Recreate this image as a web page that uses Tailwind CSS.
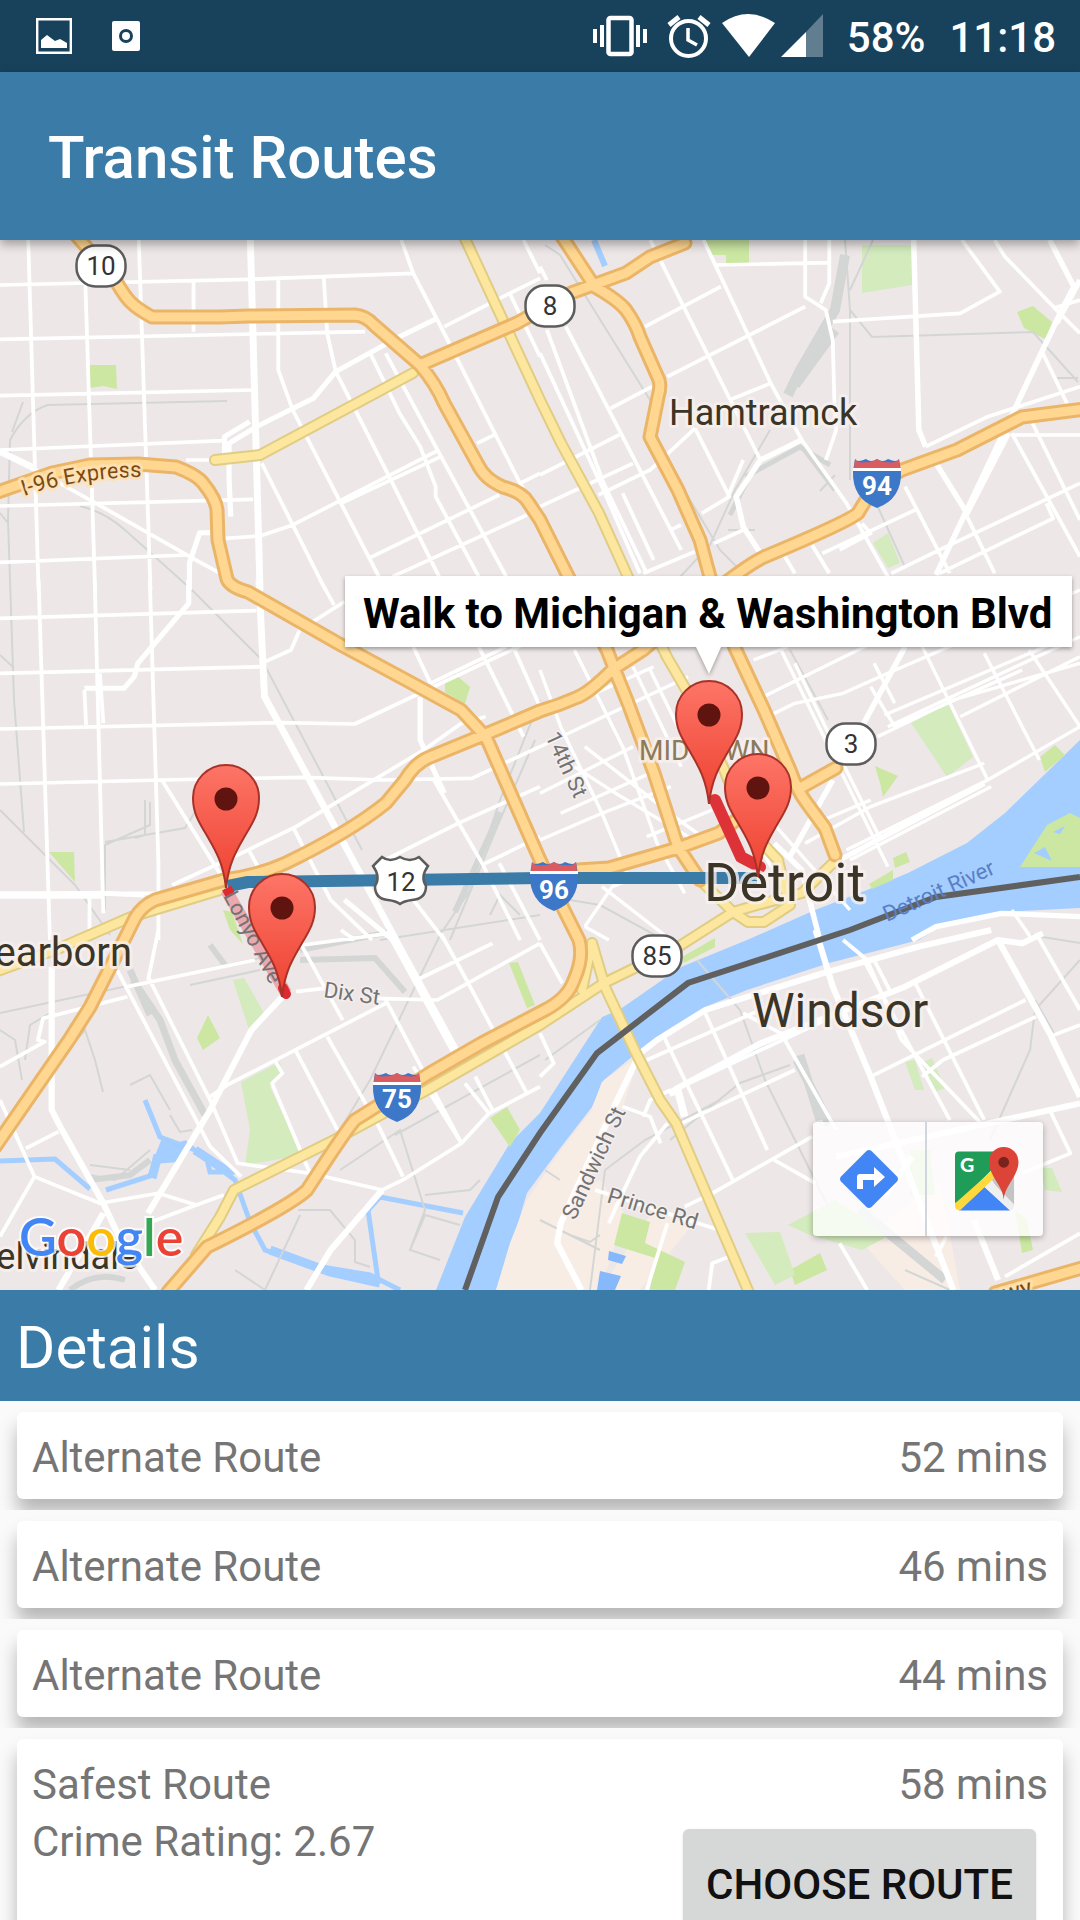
<!DOCTYPE html>
<html lang="en">
<head>
<meta charset="utf-8">
<meta name="viewport" content="width=device-width, initial-scale=1">
<title>Transit Routes</title>
<script src="https://cdn.jsdelivr.net/npm/@tailwindcss/browser@4"></script>
</head>
<body class="flex h-screen flex-col overflow-hidden bg-[#fafafa] font-['Roboto',sans-serif]">

<div class="flex h-[72px] shrink-0 items-center justify-between bg-[#18425b] pr-6 pl-9 text-white">
  <div class="flex items-center gap-10">
    <svg class="size-9" viewBox="0 0 36 36" fill="none" aria-label="Picture saved"><path d="M1.200 1.200H34.800V34.800H1.200Z" stroke="#fff" stroke-width="2.400"/><path d="M5 30V22L11 17L19 23L24 21L31 25V30Z" fill="#fff"/></svg>
    <svg class="h-[30px] w-7" viewBox="0 0 28 30" aria-label="Capture"><rect width="28" height="30" rx="2" fill="#fff"/><circle cx="14" cy="15" r="5.500" fill="none" stroke="#18425b" stroke-width="3"/></svg>
  </div>
  <div class="flex items-center">
    <svg class="h-12 w-[242px]" viewBox="594 12 242 48" fill="none" aria-label="Vibrate, alarm, Wi-Fi, mobile signal">
      <rect x="609.500" y="18" width="23" height="36" rx="2" stroke="#fff" stroke-width="4.500"/>
      <path d="M596 29V43M603 25V47M639 25V47M646 29V43" stroke="#fff" stroke-width="4"/>
      <circle cx="689.500" cy="38.500" r="17.500" stroke="#fff" stroke-width="4"/>
      <path d="M689 28V40L698 45" stroke="#fff" stroke-width="3.500"/>
      <path d="M670 25L680 17M700 17L710 25" stroke="#fff" stroke-width="5"/>
      <path d="M723 23Q749 5 776 23L750 57Z" fill="#fff"/>
      <path d="M807 32L824 14V57H807Z" fill="#607e90"/><path d="M782 57L807 32V57Z" fill="#fff"/>
    </svg>
    <span class="ml-3 pt-1 text-[42px] leading-none font-medium">58%</span>
    <span class="ml-6 pt-1 text-[42px] leading-none font-medium">11:18</span>
  </div>
</div>

<header class="relative z-10 flex h-[168px] shrink-0 items-center bg-[#3b7ba8] px-12 pt-1 shadow-[0_4px_10px_rgba(0,0,0,0.35)]">
  <h1 class="text-[60px] font-medium text-white">Transit Routes</h1>
</header>

<main class="relative aspect-[1080/1050] w-full shrink-0 overflow-hidden">
<svg class="block size-full font-['Roboto',sans-serif]" viewBox="0 240 1080 1050" role="img" aria-label="Map of Detroit with the selected route">
<defs>
  <linearGradient id="pinFill" x1="0" y1="0" x2="0" y2="1"><stop offset="0" stop-color="#fd7567"/><stop offset="1" stop-color="#ee4130"/></linearGradient>
  <g id="pin">
    <path d="M0 0C-3 -27 -12 -40 -20 -54C-28 -67 -33 -76 -33 -90A33 33 0 0 1 33 -90C33 -76 28 -67 20 -54C12 -40 3 -27 0 0Z" fill="url(#pinFill)" stroke="#a83228" stroke-width="2"/>
    <circle cy="-89" r="11.500" fill="#5f1410"/>
  </g>
  <g id="interstate">
    <path d="M-22 -24Q-20 -20 -11 -24Q-6 -20 0 -24Q6 -20 11 -24Q20 -20 22 -24L24 -12Q25 16 0 25Q-25 16 -24 -12Z" fill="#3c77c8"/>
    <path d="M-22 -24Q-18 -19 -11 -21Q-5 -20 0 -24Q5 -20 11 -21Q18 -19 22 -24L23 -14H-23Z" fill="#da5c60"/>
    <path d="M-24 -13.500H24" stroke="#fff" stroke-width="3"/>
  </g>
  <rect id="oval" x="-24.500" y="-20.500" width="49" height="41" rx="19" fill="#fff" stroke="#5c5c5c" stroke-width="2.500"/>
  <path id="express" d="M24 496Q80 477 148 477"/>
  <path id="arterialLines" d="M461 230L540 400L561 443L599 513L628 577L667 657L688 693L723 767L747 827L778 860L785 890M413 373L260 455L215 460M196 1255L220 1217L234 1190L334 1140L427 1090L540 1025L604 983L678 947L733 912L757 905L802 893L836 860M592 943L605 987L636 1053L660 1100L676 1123L750 1295M592 943L582 990M-5 972L60 948L131 917L220 890M700 880L733 912L748 922L764 922L790 905"/>
  <path id="freewayLines" d="M76 235L117 283C126 298 130 305 152 317L220 317L248 316L355 315Q366 316 374 325L420 365Q436 384 444 403L477 463C483 475 490 481 503 487Q522 492 528 502L540 520L568 576L607 650L614 668L628 703L654 773L678 847L700 880M420 365L517 323L571 293L626 273L650 257L685 243M561 235L595 287Q618 300 626 310Q636 324 640 337L659 380Q661 387 658 397L650 437L678 490L700 540L710 577L735 648L764 710L790 770Q797 790 806 802L825 828L835 855M802 787L836 768M-5 493L52 473L90 465L138 464L176 467Q197 475 203 483Q216 499 217 510L218 540L227 579Q230 587 248 592L341 645L406 680L461 710L486 737L540 860L564 910L579 940Q584 958 574 980Q568 998 545 1010L482 1043L430 1073L382 1103L355 1120Q346 1130 307 1190Q290 1206 207 1247L168 1292M1085 409L1022 417L957 450L902 470L875 485L858 513Q850 521 764 557Q735 571 643 650L612 670Q590 692 578 697Q560 705 540 711L486 734L430 757Q415 763 405 780L386 803Q350 832 286 863Q260 875 224 880L155 900Q142 906 135 918L124 940L90 1007L69 1040L-5 1147M578 870L609 868L678 848L719 833L747 812M1085 1267L995 1293"/>
</defs>
<rect y="240" width="1080" height="1050" fill="#eee7e8"/>

<!-- water -->
<path d="M1080 740L1005 813L967 843L908 873L867 890L815 910L747 940L681 967L619 1010L602 1017L540 1113L510 1143L465 1217L436 1290H496L512 1243L527 1193L561 1147L592 1107L604 1080L640 1050L705 1007L747 990L829 963L919 940L946 923L1001 912L1080 908Z" fill="#a3ceff"/>
<path d="M496 1290L510 1243L527 1200L561 1150L592 1110L602 1082L640 1055L610 1120L575 1220L560 1255L610 1290ZM600 1290L650 1215H700L640 1290Z" fill="#f8ede5"/>
<path d="M602 1082L640 1055L622 1110L592 1108Z" fill="#f8ede5"/>
<path d="M540 1290L560 1200L600 1180L625 1215L600 1290ZM860 1240L940 1180L960 1290H905Z" fill="#f8ede5"/>
<g fill="none" stroke="#a3ceff" stroke-width="5">
  <path d="M0 1161L55 1159L90 1189M106 1190L150 1176L160 1150L185 1143L235 1180L250 1222L265 1250L310 1265L370 1275L400 1290M145 1100L160 1137L195 1150M380 1197L368 1210L378 1280M380 1197L463 1213M206 1155L210 1172L235 1172" />
  <path d="M158 1155L152 1178M195 1150L233 1175M270 1250L330 1272L380 1283" stroke-width="9"/>
  <path d="M594 240L605 266" stroke-width="6"/>
</g>
<path d="M162 1138L190 1150L180 1162L152 1164Z" fill="#a3ceff"/>

<!-- parks -->
<g fill="#cbe7a2">
  <path d="M90 365H116L117 389L103 386L90 388ZM705 240H749V263H726V255H712ZM1017 312L1033 306L1052 322L1047 340L1024 328ZM445 683L455 674L470 687L465 704L445 692ZM49 852H74L75 882ZM875 766L898 776L883 797L880 783ZM1040 757L1055 745L1065 755L1045 772ZM893 858L906 852L910 862L895 868ZM869 884L893 870V880L872 889ZM509 963L518 962L535 1005L527 1008ZM197 1038L208 1015L220 1038L203 1050ZM490 1118L507 1107L520 1130L510 1147ZM223 910L232 912L243 944L230 930ZM1020 867L1047 825L1070 813L1080 818V867ZM622 1213L650 1222L645 1243L685 1262L675 1290H650L655 1258L614 1245ZM790 1270L820 1253L827 1270L795 1285ZM1015 1210L1027 1220L1033 1250L1022 1253ZM682 957L715 938V947L684 963Z"/>
</g>
<g fill="#d3ebbd">
  <path d="M862 245H912V285L862 293ZM873 543L888 533L900 563L888 568ZM911 723L948 703L973 757L947 777ZM241 1082L280 1062L283 1075L270 1087L302 1155L245 1165L250 1130ZM233 980L244 978L264 1013L249 1030ZM905 1062L915 1060L924 1090H915ZM923 1062L932 1058L945 1088L935 1092ZM745 1233L780 1232L795 1275L775 1285ZM788 1225L835 1200L890 1235L862 1250L810 1235ZM910 1150H930L935 1195H910ZM1040 1168L1052 1168L1062 1192L1045 1190ZM745 812L760 802L770 817L752 827Z"/>
</g>
<path d="M1034 853L1045 847L1052 861ZM1053 832L1065 826L1060 834Z" fill="#a3ceff"/>
<path d="M609 1251L626 1256L622 1264L608 1260ZM600 1271L621 1276L615 1290H597Z" fill="#86b8fb"/>

<!-- rail lines -->
<g fill="none" stroke="#d3d6d5">
  <g stroke-width="2">
    <path d="M227 401L48 405Q25 412 10 440L8 520L14 700L24 832M23 402L12 432M0 513L8 523M80 506Q105 512 125 530L192 590L262 660L362 850M0 655L14 668M0 810L75 885L110 935M145 800V835L135 838M150 802V825L105 845V910M105 842L185 828L195 812"/>
    <path d="M545 245L560 255L650 400L660 450L720 550L750 580M790 650L828 720M845 240L850 310L872 337L1033 332L1078 382M850 310V480M1057 378H1078M873 240L850 290M680 577L710 545L735 490L770 430M877 505L905 567M728 530H755M820 491L835 475"/>
    <path d="M540 700L500 800L470 890L440 935L370 1080L340 1130M535 740L500 820L450 940M380 940L540 915M490 915L500 895L520 915M570 900L600 905L655 935"/>
    <path d="M0 1013L250 960L395 930M190 985L260 970M0 1030L15 1040L22 1080M25 1060L30 1025L55 1010M60 1060L85 1030L95 1060L103 1092M130 1085L150 1075L170 1110M170 1115L180 1132L192 1130M90 1175L115 1180L150 1150M90 1165L130 1170M395 1135L540 1055M340 1170L400 1130L425 1210L410 1250L440 1260M298 1210L330 1210L355 1240V1262L370 1267M425 1195L470 1190L480 1180M410 1250L425 1215L460 1225M235 1270L265 1290L300 1215M0 1140L60 1045"/>
    <path d="M697 960L740 1010L765 1080L830 1210M670 1140L740 1083L790 1065M605 1170L645 1140L720 1100M605 1170L590 1290M1080 960L1035 1010L1030 1050L990 1140M1035 1000L1055 1035M560 1180L545 1170M570 1235L590 1242L600 1235M540 1220L600 1250M1030 935L1080 943M905 1270L950 1290M545 1060L600 1020"/>
  </g>
  <path d="M845 255L835 310L800 370L788 395M835 330L795 385" stroke-width="10"/>
  <path d="M745 477L800 447L830 465M750 475L730 515M803 448L835 490" stroke-width="5"/>
  <path d="M133 980L160 1020L175 1060L205 1115M130 970L150 1015" stroke-width="7"/>
  <path d="M300 950L390 932M300 960L375 958L405 992M500 812L455 912M210 945L225 965M70 1290Q95 1270 125 1280M90 1180L130 1175L150 1160" stroke-width="6"/>
  <path d="M797 1060L830 1125M860 1210L945 1280M800 1055L820 1120" stroke-width="9"/>
</g>

<!-- local streets -->
<g fill="none" stroke="#fff" stroke-linejoin="round">
  <g transform="translate(0 230) scale(.3444 .3333)" stroke-width="11">
    <path d="M82 30L112 1080M403 30L437 1080M248 165L276 1080M0 165L725 148L1200 130M0 328L735 312L1060 305M0 497L735 480M0 660L650 632M0 828L735 808M0 997L540 975M562 150V305M808 145V420L850 540L990 820L1100 1040M940 140L950 310L975 425L1130 740L1275 1040M1165 30L1200 130L1290 310L1510 760L1568 860M1520 30L1568 130M1568 145L1480 190L1290 290M1075 370L1160 550L1220 650L1265 770V800L1390 1040M1120 370L1260 640L1470 1040M760 700L945 1080M655 925L755 918L850 885L1275 660M990 820L1280 680M1070 985L1450 795M1140 1040L1530 855M1480 190L1568 380M1385 640L1435 615M0 660L270 815L560 985L640 1030M540 690H620M1510 760L1568 730"/>
    <path d="M1270 265L1160 320L975 425L910 505L745 590L665 640V740L670 860M725 575L652 620V700M610 908H580L550 1000V1080" stroke-width="15"/>
    <path d="M727 30L755 1080M0 665L100 715" stroke-width="20"/>
  </g>
  <g transform="translate(540 230) scale(.3444 .3333)" stroke-width="11">
    <path d="M0 110L20 150M20 300L185 760L310 1030M75 290L410 960M0 370L180 770L290 1030M320 30L640 690M475 30L670 460L760 630L890 820L1010 1040M510 105L840 98M305 290L525 170M370 440L770 230M205 535L325 470M550 510L670 460M0 735L230 615M0 830L270 700M170 795L320 720L450 595M240 790L330 990M450 595L550 800L470 850M380 900L410 885M545 800L590 690M505 940L590 900M300 1030L450 965M770 30V200L830 240L850 330L855 520L860 600L830 690M840 30V160L815 220M850 275L1220 250L1335 185L1225 30M1320 30L1350 80L1500 240L1568 310M1490 235L1568 210M1460 370L1530 520M1120 650L1300 560L1568 470M1370 615L1568 615M1370 610L1568 980M1430 580L1568 870M1060 770L1190 1030M820 970L1090 840M790 945L840 1030M935 880L960 910L870 960M1020 1030L1160 960L1568 760M1160 1030L1490 865L1470 820M1240 860L1320 1030M700 960L740 1030"/>
    <path d="M1085 30L1100 600L1120 650M1480 30L1550 170L1510 250L1150 1035M1568 150L1500 280M1360 610L1240 850L1150 700M640 690L570 800L590 890L640 970M640 690L760 630" stroke-width="16"/>
  </g>
  <g transform="translate(0 580) scale(.3444 .3333)" stroke-width="11">
    <path d="M112 0L145 1080M275 0L300 1000M435 0L460 850V1080M0 115L745 92M0 280L765 260M0 447L810 428L1030 432L1568 170M0 612L470 600L880 592L1110 600L1370 595L1568 500M930 0L970 75M1000 65L870 150L845 210L770 245M1200 200L1250 310M1390 200L1520 470M1490 200L1568 380M1250 310L1470 200M1410 410L1340 430L1230 510L860 740L700 820L500 915M470 600L650 900M850 740L960 960L1080 1080M1260 600L1400 850L1510 1080M1568 620L1330 730L1080 860M1400 855L1568 770M290 280L300 430M250 435L245 330M725 815L780 920M1450 850L1568 1080M260 950V1060M1200 960L1290 1080M370 940H600"/>
    <path d="M548 0V70L400 250L390 290L360 325H245M1220 350V480L1290 640M0 945L300 940L420 945M1140 1080L1000 960" stroke-width="15"/>
    <path d="M752 0L768 350L1040 870L1150 1080" stroke-width="20"/>
    <path d="M0 945H300" stroke-width="22"/>
  </g>
  <g transform="translate(540 560) scale(.3444 .3333)" stroke-width="10">
    <path d="M0 330L60 500L180 760L260 960M100 270L240 560L340 850L420 1000M0 560L430 350M0 700L270 560M60 760L320 640M0 840L180 760L380 680M130 560L390 770L470 830M100 620L220 700L430 830M260 960L210 980L130 1100M310 830L500 750M160 400L330 320M270 320L410 620M320 330L400 500M620 300L720 260M630 420L1060 200M660 470L740 430L880 400L1010 340L1568 90M700 270L1010 920M740 310L870 590L990 840M1000 465L1490 250M1010 500L1568 230M980 530L1200 420L1568 310M1110 260L1300 660M1290 280L1450 600M1420 270L1568 500M890 870L1300 660M900 900L1310 680M800 790L960 720M770 850L960 740L1290 610M960 380L1030 500L1400 330M1220 470L1568 290M1300 660L1568 500M1030 430L970 310M130 1100L200 1140M180 980L380 1140M660 770L900 1050M600 800L690 950M1370 1050L1430 1140"/>
    <path d="M1060 260L940 490M850 660L720 900M870 900L1290 670M680 850L760 930L810 1130M1080 1140L1150 1100L1340 1060L1568 1070" stroke-width="16"/>
  </g>
  <g transform="translate(0 930) scale(.3444 .3333)" stroke-width="11">
    <path d="M340 120L610 650L700 740M430 140L610 510L690 700L900 730M460 0L430 150M370 170L740 90M0 410L130 335L110 330L125 265L370 200M875 45L995 270M990 0L1030 30M880 45L1130 10M860 185L940 175M1090 205L1270 210L1568 40M1120 210L1340 640M660 465L1120 220M610 500L660 465M860 365L980 600M950 320L1100 590L1170 740M800 395L820 430L790 460L900 730M1210 150L1430 40M1280 10L1360 160L1530 490M1350 460L1420 550M1380 440L1430 540M1200 410L1340 640L1420 550L1568 470M1170 750L1340 640M900 730L1110 780L1170 750M0 510L100 740L0 920M75 655L170 605M100 740L290 820L460 790L570 825L650 795M570 825L430 880"/>
    <path d="M820 200L730 300L610 540L430 850M1110 780L960 960L890 1080M150 110V540L180 600L300 820L350 930L450 1080M300 850L170 1080" stroke-width="18"/>
    <path d="M1130 0L1320 360" stroke-width="26"/>
  </g>
  <g transform="translate(540 930) scale(.3444 .3333)" stroke-width="11">
    <path d="M0 40L65 160M0 310L40 400L0 440M310 390L640 240M360 320L560 750M480 250L660 660M390 480L830 270M410 580L740 420M590 250L700 310L860 600M880 30L950 90L1050 330L1280 580M940 90L1080 360L1190 570M970 90L1020 190M1090 160L1290 570M960 440L1410 210M1110 440L1170 390L1440 260M1480 320L1568 285M1440 10L1568 240M500 790L790 620M420 830L500 790M680 690L800 760M370 580L290 680L230 810L200 880M240 530L320 560L350 640M300 560L320 510L380 480M160 780L520 900M370 880L310 1080M490 1080L500 1000L550 980M870 940L950 1080M1480 540L1540 670L1400 730M1350 1040L1568 910M1150 980L1180 920"/>
    <path d="M120 1080L50 940L60 880L220 520L290 370L340 330L480 240L820 130L1100 50L1310 0M800 0L850 170L960 440L1200 1080M390 480L640 340L1060 170L1330 30L1400 40L1460 10M1330 30L1480 310L1568 500M860 680L1568 520M1000 800L1080 680M1260 870L1330 1050" stroke-width="18"/>
    <path d="M375 490L400 480L420 560" stroke-width="22"/>
  </g>
</g>

<!-- arterials and freeways -->
<g fill="none" stroke-linejoin="round" stroke-linecap="round">
  <use href="#arterialLines" stroke="#e0cd83" stroke-width="12"/>
  <use href="#arterialLines" stroke="#fde79f" stroke-width="8"/>
  <use href="#freewayLines" stroke="#ebb568" stroke-width="15"/>
  <use href="#freewayLines" stroke="#ffd791" stroke-width="9"/>
</g>
<path d="M1080 877L936 897L850 930L688 983L597 1053L540 1133L498 1197L465 1290" fill="none" stroke="#606060" stroke-width="6"/>

<!-- selected route -->
<g fill="none" stroke-linejoin="round">
  <path d="M228 886L248 882L540 878L757 878" stroke="#3b7ba8" stroke-width="12"/>
  <path d="M715 800L741 857L760 867" stroke="#dd3237" stroke-width="12" stroke-linecap="round"/>
  <path d="M226 890L286 993" stroke="#e9a9ae" stroke-width="12"/>
  <path d="M224 894L233 889" stroke="#dd2a30" stroke-width="8"/>
  <path d="M283 988L286 994" stroke="#dd2a30" stroke-width="10" stroke-linecap="round"/>
</g>

<!-- labels -->
<g stroke="#f7f1ee" stroke-opacity=".8" stroke-width="6" paint-order="stroke" stroke-linejoin="round" fill="#3b3528">
  <text x="669" y="425" font-size="36">Hamtramck</text>
  <text x="704" y="901" font-size="54">Detroit</text>
  <text x="752" y="1027" font-size="48">Windsor</text>
  <text x="132" y="966" font-size="40" text-anchor="end">earborn</text>
  <text x="138" y="1269" font-size="36" text-anchor="end">elvindale</text>
  <text x="639" y="760" font-size="28" fill="#8b7a5b">MIDTOWN</text>
  <text font-size="22" fill="#7a4a14" stroke="#ffe3b5"><textPath href="#express">I-96 Express</textPath></text>
  <g font-size="22" fill="#737373" stroke-width="3">
    <text transform="translate(545 736) rotate(65)">14th St</text>
    <text transform="translate(323 997) rotate(8)">Dix St</text>
    <text transform="translate(575 1221) rotate(-65)">Sandwich St</text>
    <text transform="translate(606 1202) rotate(17)">Prince Rd</text>
    <text transform="translate(223 896) rotate(62)" stroke="none">Lonyo Ave</text>
    <text transform="translate(887 922) rotate(-24)" fill="#5a7fc4" stroke="none">Detroit River</text>
  </g>
  <text x="1005" y="1302" font-size="24" fill="#7a4a14" stroke="#ffe3b5" transform="rotate(-15 1005 1302)">wy</text>
</g>

<!-- road shields -->
<g font-size="26" text-anchor="middle" fill="#333">
  <use href="#oval" x="101" y="266"/><text x="101" y="275">10</text>
  <use href="#oval" x="550" y="306"/><text x="550" y="315">8</text>
  <use href="#oval" x="851" y="744"/><text x="851" y="753">3</text>
  <use href="#oval" x="657" y="956"/><text x="657" y="965">85</text>
  <path d="M382 857Q390 863 400 857Q410 863 419 857L428 866Q420 877 426 886Q426 899 412 900Q404 901 400 904Q396 901 388 900Q375 899 375 886Q381 877 373 866Z" fill="#fff" stroke="#5c5c5c" stroke-width="2.500"/>
  <text x="401" y="891">12</text>
  <g fill="#fff" font-weight="700">
    <use href="#interstate" x="877" y="483"/><text x="877" y="495">94</text>
    <use href="#interstate" x="554" y="886"/><text x="554" y="899">96</text>
    <use href="#interstate" x="397" y="1097"/><text x="397" y="1108">75</text>
  </g>
</g>

<!-- markers -->
<use href="#pin" x="226" y="888"/>
<use href="#pin" x="282" y="997"/>
<use href="#pin" x="709" y="804"/>
<use href="#pin" x="758" y="877"/>

<!-- info window -->
<g class="drop-shadow-[0_2px_2px_rgba(0,0,0,0.35)]"><path d="M345 576H1072V647H721L709 674L696 647H345Z" fill="#fff"/></g>
<text x="363" y="628" font-size="42" font-weight="700">Walk to Michigan &amp; Washington Blvd</text>

<text x="19" y="1256" class="font-['Lato',sans-serif]" font-size="52" font-weight="600" stroke="#fff" stroke-opacity=".8" stroke-width="4" paint-order="stroke"><tspan fill="#4285f4">G</tspan><tspan fill="#ea4335">o</tspan><tspan fill="#fbbc05">o</tspan><tspan fill="#4285f4">g</tspan><tspan fill="#34a853">l</tspan><tspan fill="#ea4335">e</tspan></text>
</svg>

<nav class="absolute right-[37px] bottom-[54px] flex h-[114px] w-[230px] divide-x-2 divide-gray-300 rounded bg-white/80 shadow-[0_2px_6px_rgba(0,0,0,0.3)]">
  <a href="#directions" aria-label="Directions" class="flex flex-1 items-center justify-center">
    <svg class="size-[60px]" viewBox="0 0 60 60"><path d="M27.500 2Q30 0 32.500 2L58 27.500Q60 30 58 32.500L32.500 58Q30 60 27.500 58L2 32.500Q0 30 2 27.500Z" fill="#4285f4"/><path d="M18 40V28Q18 25 21 25H35V18L46 28L35 38V31H24V40Z" fill="#fff"/></svg>
  </a>
  <a href="#maps" aria-label="Open in Google Maps" class="flex flex-1 items-center justify-center pl-1">
    <svg class="h-[66px] w-16" viewBox="0 0 65 66">
      <path d="M4 5H56L4 57Q0 60 0 55V9Q0 5 4 5Z" fill="#1f9d58"/>
      <path d="M36 32L50 18L60 15V60L57 63Z" fill="#c4c4c4"/>
      <path d="M4 65L30 41L56 65Z" fill="#4285f4"/>
      <path d="M30 41L36 34L60 59Q60 64 56 65Z" fill="#efefef"/>
      <path d="M0 58L38 24L42 30L5 65Q0 65 0 60Z" fill="#ffd83b"/>
      <text x="5" y="26" class="font-['Lato',sans-serif]" font-size="20" font-weight="900" fill="#fff">G</text>
      <path d="M49.500 54C49 40 34.500 30 34.500 15.500A15 15 0 0 1 64.500 15.500C64.500 30 50 40 49.500 54Z" fill="#dc4437"/>
      <circle cx="49.500" cy="16" r="5.500" fill="#7a231d"/>
    </svg>
  </a>
</nav>
</main>

<section class="flex min-h-0 flex-1 flex-col">
  <h2 class="flex h-[111px] shrink-0 items-center bg-[#3b7ba8] px-4 pt-1 text-[60px] text-white">Details</h2>
  <ul class="min-h-0 flex-1 overflow-hidden text-[42px] leading-[57px] text-[#757575]">
    <li class="overflow-hidden px-[17px] py-[11px]">
      <div class="flex h-[87px] items-center justify-between rounded-md bg-white px-[15px] pt-1 shadow-[0_14px_18px_rgba(0,0,0,0.27)]"><span>Alternate Route</span><span>52 mins</span></div>
    </li>
    <li class="overflow-hidden px-[17px] py-[11px]">
      <div class="flex h-[87px] items-center justify-between rounded-md bg-white px-[15px] pt-1 shadow-[0_14px_18px_rgba(0,0,0,0.27)]"><span>Alternate Route</span><span>46 mins</span></div>
    </li>
    <li class="overflow-hidden px-[17px] py-[11px]">
      <div class="flex h-[87px] items-center justify-between rounded-md bg-white px-[15px] pt-1 shadow-[0_14px_18px_rgba(0,0,0,0.27)]"><span>Alternate Route</span><span>44 mins</span></div>
    </li>
    <li class="overflow-hidden px-[17px] py-[11px]">
      <div class="rounded-md bg-white px-[15px] pt-[17px] pb-4 shadow-[0_14px_18px_rgba(0,0,0,0.27)]">
        <div class="flex justify-between"><span>Safest Route</span><span>58 mins</span></div>
        <div class="flex items-start justify-between pr-3">
          <span>Crime Rating: 2.67</span>
          <button type="button" class="mt-4 h-[110px] w-[353px] rounded-md bg-[#d6d7d7] text-[42px] font-medium text-[#111] shadow">CHOOSE ROUTE</button>
        </div>
      </div>
    </li>
  </ul>
</section>
</body>
</html>
